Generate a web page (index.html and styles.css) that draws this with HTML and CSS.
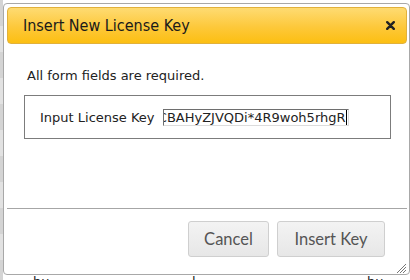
FILE: index.html
```html
<!DOCTYPE html>
<html lang="en">
<head>
    <meta charset="UTF-8">
    <title>Insert New License Key</title>
    <link rel="stylesheet" href="styles.css">
</head>
<body>
    <div class="backdrop">
        <div class="backdrop-side"></div>
        <div class="backdrop-main">
            <div class="backdrop-row">
                <span>bu</span>
                <span>l</span>
                <span>bu</span>
            </div>
        </div>
    </div>

    <div class="dialog">
        <div class="dialog-title">
            <span>Insert New License Key</span>
            <svg class="close" width="9" height="9" viewBox="0 0 9 9">
                <path d="M1.2 1.2 L7.8 7.8 M7.8 1.2 L1.2 7.8" stroke="#222" stroke-width="2.4" stroke-linecap="round"/>
            </svg>
        </div>
        <div class="dialog-body">
            <p class="note">All form fields are required.</p>
            <div class="fieldset">
                <label>Input License Key</label>
                <div class="key-input"><span class="key-text">CBAHyZJVQDi*4R9woh5rhgR</span></div>
            </div>
        </div>
        <div class="dialog-buttons">
            <button class="btn">Cancel</button>
            <button class="btn">Insert Key</button>
        </div>
        <svg class="resize" width="10" height="10" viewBox="0 0 10 10">
            <path d="M1 10 L10 1 M4 10 L10 4 M7 10 L10 7" stroke="#777" stroke-width="1"/>
        </svg>
    </div>
</body>
</html>
```

FILE: styles.css
```css
body {
    margin: 0;
    width: 410px;
    height: 280px;
    overflow: hidden;
    background: #fff;
    font-family: "DejaVu Sans", Verdana, sans-serif;
}
.backdrop {
    display: flex;
    height: 280px;
}
.backdrop-side {
    width: 3px;
    background: repeating-linear-gradient(#d4d4d4 0, #d4d4d4 26px, #e2e2e2 26px, #e2e2e2 52px);
}
.backdrop-main {
    flex: 1;
    padding-top: 274px;
}
.backdrop-row {
    display: grid;
    grid-template-columns: 159px 175px auto;
    padding-left: 30px;
    font-size: 13px;
    color: #222;
}
.dialog {
    position: absolute;
    left: 3px;
    top: 3px;
    width: 400px;
    height: 264px;
    padding: 3px 2px 3px 3px;
    background: #fff;
    border: 1px solid #a8a8a8;
    border-radius: 4px;
    display: flex;
    flex-direction: column;
}
.dialog-title {
    height: 35px;
    flex: none;
    display: flex;
    align-items: center;
    justify-content: space-between;
    padding: 0 11px 0 15px;
    background: linear-gradient(#fedb72, #fdc83a 55%, #fcbf12);
    border: 1px solid #e1b13c;
    border-radius: 4px;
    font-family: "DejaVu Sans Condensed", "DejaVu Sans", sans-serif;
    font-size: 16px;
    color: #1a1a1a;
}
.dialog-body {
    flex: 1;
    padding: 0 16px 0 17px;
    border-bottom: 1px solid #a6a6a6;
}
.note {
    margin: 24px 0 0;
    padding-left: 3px;
    font-size: 13px;
    line-height: 15px;
    color: #222;
}
.fieldset {
    display: flex;
    align-items: center;
    gap: 8px;
    height: 42px;
    margin-top: 12px;
    padding-left: 15px;
    border: 1px solid #7c7c7c;
    font-size: 13px;
    color: #222;
}
.key-input {
    width: 183px;
    height: 15px;
    overflow: hidden;
    display: flex;
    justify-content: flex-end;
    border: 1px solid;
    border-color: #6e6e6e #dcdcdc #dcdcdc #6e6e6e;
    padding-right: 1px;
    line-height: 15px;
}
.key-text {
    white-space: nowrap;
    border-right: 1px solid #000;
}
.dialog-buttons {
    display: flex;
    flex: none;
    justify-content: flex-end;
    align-items: flex-start;
    gap: 8px;
    padding: 12px 22px 0 0;
    height: 62px;
    box-sizing: border-box;
}
.btn {
    height: 36px;
    padding: 0 10px;
    background: linear-gradient(#f3f3f3, #e7e7e7);
    border: 1px solid #cfcfcf;
    border-radius: 3px;
    font-family: Lato, sans-serif;
    font-size: 16.5px;
    color: #555;
}
.btn:first-child {
    width: 81px;
}
.btn:last-child {
    width: 108px;
}
.resize {
    position: absolute;
    right: 3px;
    bottom: 1px;
}
```
